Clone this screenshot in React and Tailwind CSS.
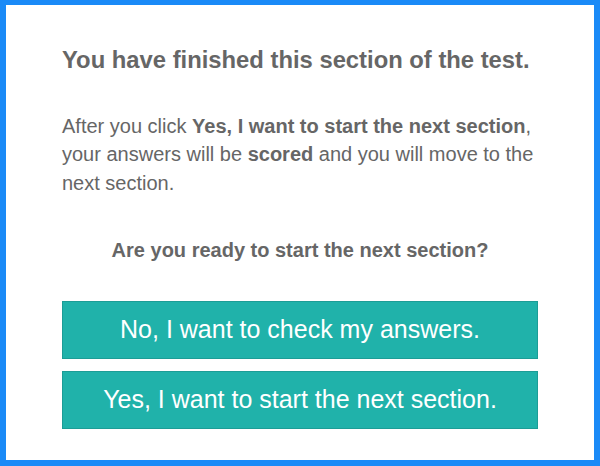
export default function App() {
  return (
    <div className="box-border h-[466px] w-[600px] border-[6px] border-t-[5px] border-[#1a8af7] bg-white px-[56px] font-['Liberation_Sans',Arial,sans-serif] text-[#666666]">
      <h1 className="mt-[40px] text-[23.8px] font-bold leading-[30px]">
        You have finished this section of the test.
      </h1>

      <p className="mt-[36.5px] text-[20px] leading-[28.5px]">
        After you click <b>Yes, I want to start the next section</b>, your answers will be{" "}
        <b>scored</b> and you will move to the next section.
      </p>

      <p className="mt-[38.5px] text-center text-[20px] font-bold leading-[28.5px]">
        Are you ready to start the next section?
      </p>

      <div className="mt-[37px] flex flex-col gap-[12px]">
        <button className="flex h-[58px] w-full items-center justify-center border border-[#1c9d96] bg-[#20b2aa] text-[25px] text-white">
          No, I want to check my answers.
        </button>
        <button className="flex h-[58px] w-full items-center justify-center border border-[#1c9d96] bg-[#20b2aa] text-[25px] text-white">
          Yes, I want to start the next section.
        </button>
      </div>
    </div>
  );
}
